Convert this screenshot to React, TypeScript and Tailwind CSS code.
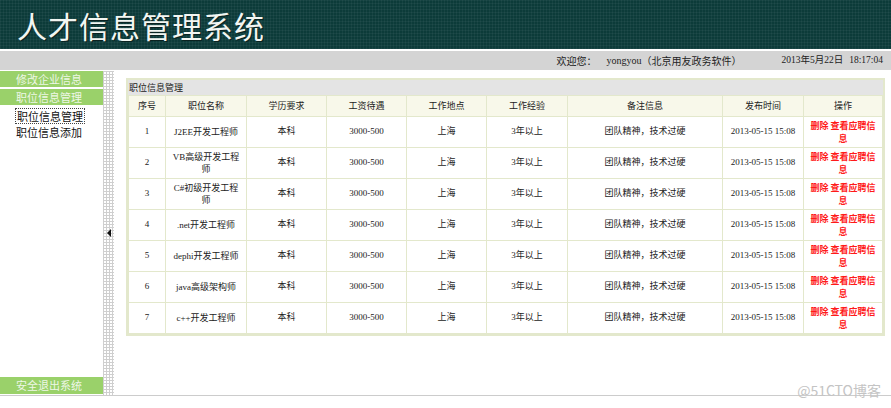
import React from "react"

const jobs = [
  { id: 1, name: ["J2EE开发工程师"] },
  { id: 2, name: ["VB高级开发工程", "师"] },
  { id: 3, name: ["C#初级开发工程", "师"] },
  { id: 4, name: [".net开发工程师"] },
  { id: 5, name: ["dephi开发工程师"] },
  { id: 6, name: ["java高级架构师"] },
  { id: 7, name: ["c++开发工程师"] },
]

const heads = ["序号", "职位名称", "学历要求", "工资待遇", "工作地点", "工作经验", "备注信息", "发布时间", "操作"]
const widths = ["w-[37px]", "w-[81px]", "w-[80px]", "w-[80px]", "w-[80px]", "w-[81px]", "w-[155px]", "w-[81px]", "w-[79px]"]

const cell = "border border-[#e3e8cc] text-center align-middle px-[2px]"

export default function App() {
  return (
    <div className="relative w-[891px] h-[408px] overflow-hidden bg-white font-['Liberation_Serif','Noto_Sans_CJK_SC',serif] text-[#222]">
      {/* banner */}
      <div className="h-[49px] bg-[#0c3b39] bg-[linear-gradient(90deg,rgba(255,255,255,0.045)_1px,transparent_1px),linear-gradient(rgba(255,255,255,0.045)_1px,transparent_1px)] bg-[length:3px_3px] flex items-center pl-[17px]">
        <h1 className="text-[30px] leading-none text-[#f2f6f2] font-['Noto_Sans_CJK_SC',sans-serif] tracking-[1px] [text-shadow:1px_1px_0_#0a2220]">
          人才信息管理系统
        </h1>
      </div>
      <div className="h-[2px] bg-white" />
      <div className="h-[19px] bg-[#d4d4d4] flex items-center justify-end pr-[8px] text-[10px] text-[#222]">
        <span className="font-['Noto_Sans_CJK_SC',sans-serif]">欢迎您：</span>
        <span className="ml-[10px]">yongyou</span>
        <span className="font-['Noto_Sans_CJK_SC',sans-serif]">（北京用友政务软件）</span>
        <span className="ml-[40px] text-[9.5px]">2013年5月22日</span>
        <span className="ml-[6px] text-[9.5px]">18:17:04</span>
      </div>
      <div className="h-px bg-white" />

      <div className="flex h-[324px]">
        {/* left menu */}
        <div className="w-[105px] flex flex-col justify-between text-[11px] font-['Noto_Sans_CJK_SC',sans-serif]">
          <div className="flex flex-col">
            <div className="h-[16px] leading-[16px] bg-[#9ad16a] text-[#eef7e6] pl-[16px]">修改企业信息</div>
            <div className="h-[16px] leading-[16px] bg-[#9ad16a] text-[#eef7e6] pl-[16px] mt-[2px]">职位信息管理</div>
            <div className="h-[16px] leading-[14px] mt-[3px] pl-[15px] text-[#111]">
              <span className="inline-block border border-dotted border-[#444] px-px">职位信息管理</span>
            </div>
            <div className="h-[16px] leading-[16px] pl-[16px] text-[#111]">职位信息添加</div>
          </div>
          <div className="h-[17px] leading-[17px] bg-[#9ad16a] text-[#eef7e6] pl-[16px] mb-px">安全退出系统</div>
        </div>

        {/* splitter */}
        <div className="w-[11px] flex items-center justify-center bg-white bg-[linear-gradient(90deg,#cfcfcf_1px,transparent_1px),linear-gradient(#cfcfcf_1px,transparent_1px)] bg-[length:3px_3px]">
          <div className="w-0 h-0 border-y-[4px] border-y-transparent border-r-[4px] border-r-[#111]" />
        </div>

        {/* content */}
        <div className="flex-1 pl-[12px] pt-[7px] pr-[6px]">
          <div className="border-2 border-[#e3e8cc]">
            <div className="h-[15px] leading-[15px] bg-[#e4e4e4] text-[9px] pl-[1px] font-['Noto_Sans_CJK_SC',sans-serif]">职位信息管理</div>
            <table className="w-full table-fixed border-collapse text-[9px]">
              <colgroup>
                {widths.map((w, i) => (
                  <col key={i} className={w} />
                ))}
              </colgroup>
              <thead>
                <tr className="h-[21px] bg-[#f8f8ea]">
                  {heads.map((h) => (
                    <th key={h} className={`${cell} font-normal text-[#222] font-['Noto_Sans_CJK_SC',sans-serif]`}>
                      {h}
                    </th>
                  ))}
                </tr>
              </thead>
              <tbody>
                {jobs.map((j) => (
                  <tr key={j.id} className="h-[31px]">
                    <td className={cell}>{j.id}</td>
                    <td className={`${cell} leading-[12px]`}>
                      {j.name.map((n, i) => (
                        <div key={i}>{n}</div>
                      ))}
                    </td>
                    <td className={cell}>本科</td>
                    <td className={cell}>3000-500</td>
                    <td className={cell}>上海</td>
                    <td className={cell}>3年以上</td>
                    <td className={cell}>团队精神，技术过硬</td>
                    <td className={cell}>2013-05-15 15:08</td>
                    <td className={`${cell} leading-[13px] text-[#ff1a1a] font-bold font-['Noto_Sans_CJK_SC',sans-serif]`}>
                      <div>删除 查看应聘信</div>
                      <div>息</div>
                    </td>
                  </tr>
                ))}
              </tbody>
            </table>
          </div>
        </div>
      </div>

      <div className="h-px bg-[#cccccc]" />
      <div className="absolute right-[10px] bottom-[7px] text-[14px] text-[#c4c4c4] font-['Noto_Sans_CJK_SC',sans-serif]">@51CTO博客</div>
    </div>
  )
}
